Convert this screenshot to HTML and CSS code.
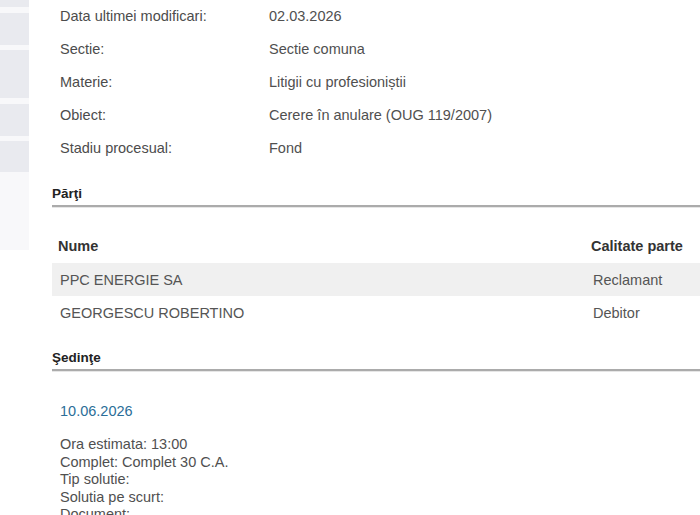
FILE: index.html
```html
<!DOCTYPE html>
<html lang="ro">
<head>
<meta charset="utf-8">
<title>Dosar</title>
<link rel="stylesheet" href="styles.css">
</head>
<body>
<div class="page">
  <aside class="side">
    <div class="side-item h7"></div>
    <div class="side-item h32"></div>
    <div class="side-item h48"></div>
    <div class="side-item h32"></div>
    <div class="side-item h31"></div>
  </aside>
  <main class="main">
    <table class="info">
      <tr><td class="lbl">Data ultimei modificari:</td><td>02.03.2026</td></tr>
      <tr><td class="lbl">Sectie:</td><td>Sectie comuna</td></tr>
      <tr><td class="lbl">Materie:</td><td>Litigii cu profesioniștii</td></tr>
      <tr><td class="lbl">Obiect:</td><td>Cerere în anulare (OUG 119/2007)</td></tr>
      <tr><td class="lbl">Stadiu procesual:</td><td>Fond</td></tr>
    </table>

    <h2 class="sect">Părţi</h2>

    <table class="parti">
      <thead>
        <tr><th class="c-nume">Nume</th><th class="c-cal">Calitate parte</th></tr>
      </thead>
      <tbody>
        <tr class="odd"><td>PPC ENERGIE SA</td><td>Reclamant</td></tr>
        <tr><td>GEORGESCU ROBERTINO</td><td>Debitor</td></tr>
      </tbody>
    </table>

    <h2 class="sect sect-2">Şedinţe</h2>

    <div class="sedinta">
      <div class="date">10.06.2026</div>
      <div class="details">
        <div>Ora estimata: 13:00</div>
        <div>Complet: Complet 30 C.A.</div>
        <div>Tip solutie:</div>
        <div>Solutia pe scurt:</div>
        <div>Document:</div>
      </div>
    </div>
  </main>
</div>
</body>
</html>
```

FILE: styles.css
```css
html, body {
  margin: 0;
  padding: 0;
  background: #ffffff;
  overflow: hidden;
}

body {
  font-family: "Liberation Sans", Arial, sans-serif;
  font-size: 14.5px;
  color: #505050;
}

.page {
  display: flex;
  align-items: flex-start;
  width: 700px;
  height: 515px;
  overflow: hidden;
}

.side {
  flex: 0 0 29px;
  height: 250px;
  background: #f8f8fa;
  display: flex;
  flex-direction: column;
  gap: 5.5px;
}

.side-item {
  background: #e9eaef;
}
.h7 { height: 7px; }
.h32 { height: 32px; }
.h48 { height: 48px; }
.h31 { height: 31px; }

.main {
  flex: 1 1 auto;
  padding-left: 23px;
  min-width: 0;
}

.info {
  border-collapse: collapse;
  margin-top: -1px;
}
.info td {
  height: 33px;
  padding: 0;
  vertical-align: middle;
  white-space: nowrap;
}
.info td.lbl {
  width: 209px;
  padding-left: 8px;
  color: #4c4c4c;
}

.sect {
  margin: 22px 0 0;
  font-family: "Liberation Sans", Arial, sans-serif;
  font-size: 13.5px;
  font-weight: bold;
  line-height: 16px;
  color: #222222;
  padding-bottom: 3px;
  border-bottom: 2px solid #ababab;
  box-shadow: 0 1px 0 #e6e6e6;
}

.parti {
  width: 100%;
  border-collapse: collapse;
  margin-top: 22px;
}
.parti th {
  height: 34px;
  padding: 0 0 0 6px;
  text-align: left;
  font-weight: bold;
  font-size: 14.5px;
  color: #333333;
  vertical-align: middle;
}
.parti th.c-cal { width: 109px; }
.parti td {
  height: 33px;
  padding: 0 0 0 8px;
  vertical-align: middle;
  white-space: nowrap;
  color: #555555;
}
.parti tr.odd td {
  background: #f0f0f0;
}

.sect-2 {
  margin-top: 21px;
}

.sedinta {
  padding-left: 8px;
}
.date {
  margin-top: 30px;
  line-height: 20px;
  color: #2b6e98;
}
.details {
  margin-top: 15px;
  line-height: 17.5px;
  color: #505050;
}
```
